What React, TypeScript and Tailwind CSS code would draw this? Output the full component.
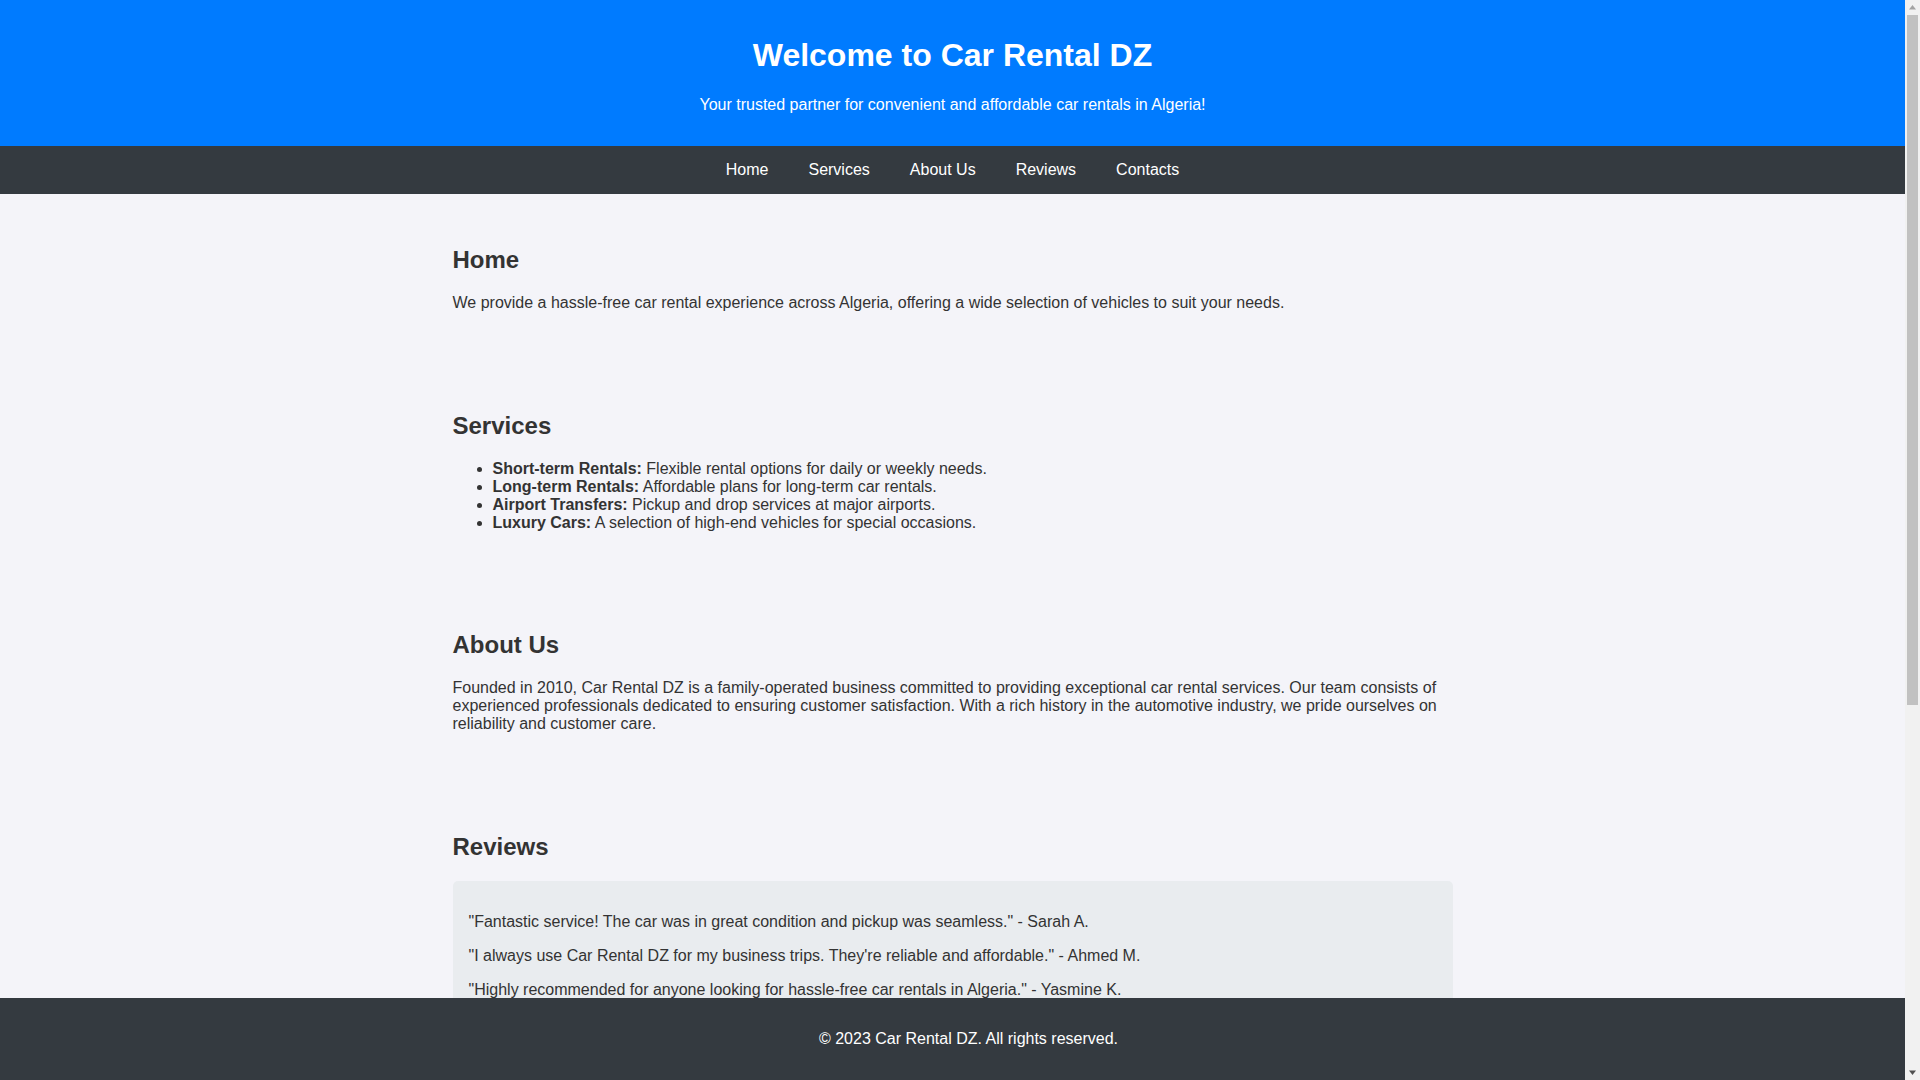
import React from "react";

const reviews = [
  '"Fantastic service! The car was in great condition and pickup was seamless." - Sarah A.',
  '"I always use Car Rental DZ for my business trips. They\'re reliable and affordable." - Ahmed M.',
  '"Highly recommended for anyone looking for hassle-free car rentals in Algeria." - Yasmine K.',
];

function Scrollbar() {
  return (
    <div className="fixed top-0 right-0 w-[15px] h-screen bg-[#f1f1f1]">
      <svg width="15" height="1080" viewBox="0 0 15 1080" className="block">
        <polygon points="7.5,5 11,9.5 4,9.5" fill="#a3a3a3" />
        <rect x="2" y="15" width="11" height="690" fill="#c1c1c1" />
        <polygon points="4,1070.5 11,1070.5 7.5,1075" fill="#505050" />
      </svg>
    </div>
  );
}

export default function App() {
  return (
    <div className="min-h-screen pr-[15px] bg-[#f4f4f9] text-[#333] text-[16px] leading-[normal] font-['Liberation_Sans',Arial,sans-serif]">
      <header className="bg-[#007bff] text-white text-center p-4">
        <h1 className="text-[32px] font-bold my-[21.44px]">Welcome to Car Rental DZ</h1>
        <p className="my-4">Your trusted partner for convenient and affordable car rentals in Algeria!</p>
      </header>

      <nav className="bg-[#343a40] py-[15px] flex justify-center gap-10">
        <a href="#home" className="text-white no-underline">Home</a>
        <a href="#services" className="text-white no-underline">Services</a>
        <a href="#about" className="text-white no-underline">About Us</a>
        <a href="#reviews" className="text-white no-underline">Reviews</a>
        <a href="#contacts" className="text-white no-underline">Contacts</a>
      </nav>

      <main className="max-w-[1000px] mx-auto">
        <section id="home" className="py-8">
          <h2 className="text-[24px] font-bold my-[19.92px]">Home</h2>
          <p className="my-4">
            We provide a hassle-free car rental experience across Algeria, offering a wide selection of vehicles to suit your needs.
          </p>
        </section>

        <section id="services" className="py-8">
          <h2 className="text-[24px] font-bold my-[19.92px]">Services</h2>
          <ul className="list-disc pl-10 my-4">
            <li><strong className="font-bold">Short-term Rentals:</strong> Flexible rental options for daily or weekly needs.</li>
            <li><strong className="font-bold">Long-term Rentals:</strong> Affordable plans for long-term car rentals.</li>
            <li><strong className="font-bold">Airport Transfers:</strong> Pickup and drop services at major airports.</li>
            <li><strong className="font-bold">Luxury Cars:</strong> A selection of high-end vehicles for special occasions.</li>
          </ul>
        </section>

        <section id="about" className="py-8">
          <h2 className="text-[24px] font-bold my-[19.92px]">About Us</h2>
          <p className="my-4">
            Founded in 2010, Car Rental DZ is a family-operated business committed to providing exceptional car rental services. Our team consists of experienced professionals dedicated to ensuring customer satisfaction. With a rich history in the automotive industry, we pride ourselves on reliability and customer care.
          </p>
        </section>

        <section id="reviews" className="py-8">
          <h2 className="text-[24px] font-bold my-[19.92px]">Reviews</h2>
          <div className="bg-[#e9ecef] rounded-[5px] p-4">
            {reviews.map((r) => (
              <p key={r} className="my-4">{r}</p>
            ))}
          </div>
        </section>

        <section id="contacts" className="py-8 min-h-[632px]">
          <h2 className="text-[24px] font-bold my-[19.92px]">Contacts</h2>
          <p className="my-4">Phone: +213 555 123 456</p>
          <p className="my-4">Email: contact@carrentaldz.com</p>
          <p className="my-4">Address: 12 Rue Didouche Mourad, Algiers, Algeria</p>
          <form className="flex flex-col gap-3 max-w-[500px]">
            <input className="border border-[#ccc] rounded-[5px] p-2 bg-white" placeholder="Your Name" />
            <input className="border border-[#ccc] rounded-[5px] p-2 bg-white" placeholder="Your Email" />
            <textarea className="border border-[#ccc] rounded-[5px] p-2 bg-white h-[120px]" placeholder="Your Message" />
            <button type="button" className="bg-[#007bff] text-white rounded-[5px] py-2 px-4 self-start">Send</button>
          </form>
        </section>
      </main>

      <footer className="fixed bottom-0 left-0 right-[15px] bg-[#343a40] text-white text-center py-4 pl-8 pr-0">
        <p className="my-4">© 2023 Car Rental DZ. All rights reserved.</p>
      </footer>

      <Scrollbar />
    </div>
  );
}
